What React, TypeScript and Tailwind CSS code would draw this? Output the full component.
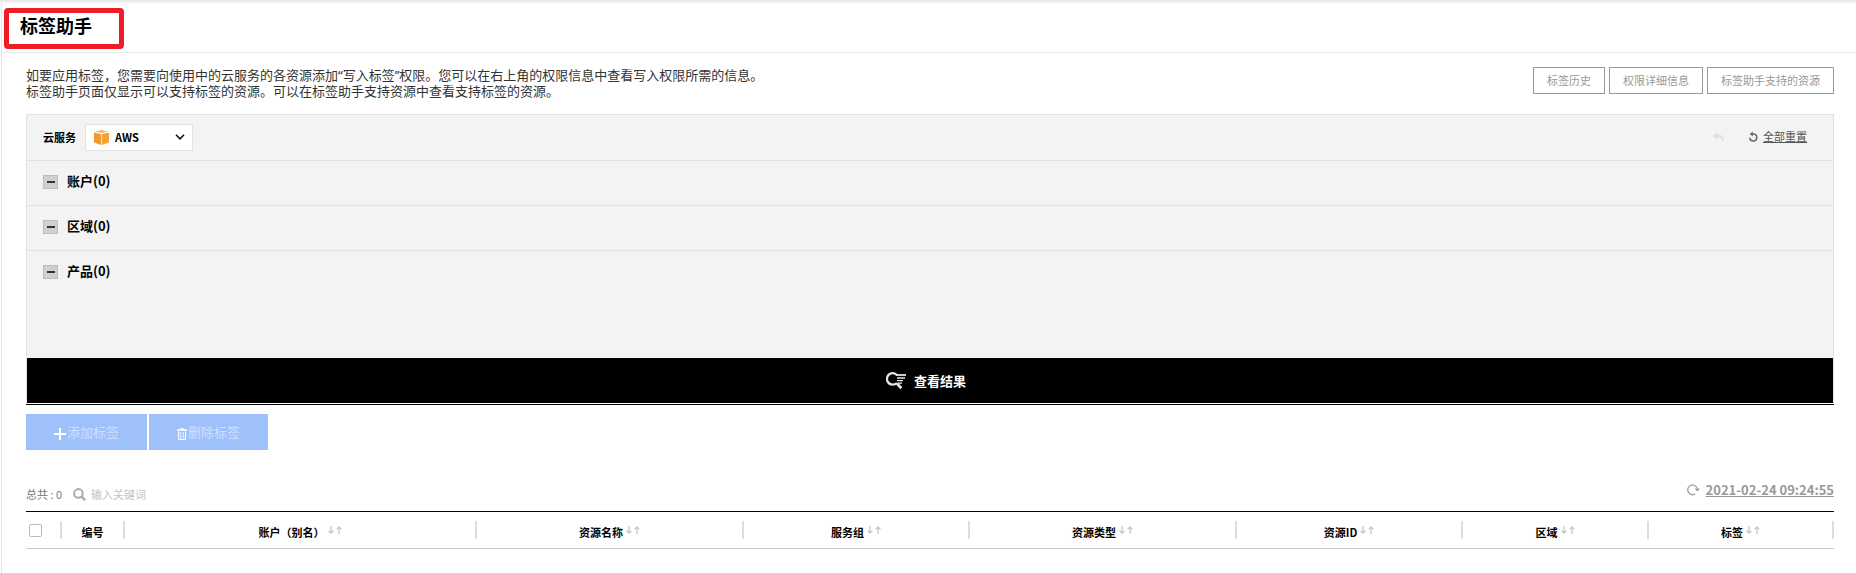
import { useState } from "react";

const COLUMNS = [
  { label: "账户（别名）", width: 352 },
  { label: "资源名称", width: 267 },
  { label: "服务组", width: 226 },
  { label: "资源类型", width: 267 },
  { label: "资源ID", width: 226 },
  { label: "区域", width: 186 },
  { label: "标签", width: 185 },
];

const CHECK_WIDTH = 36;
const NUMBER_WIDTH = 63;
const TOTAL_WIDTH =
  CHECK_WIDTH + NUMBER_WIDTH + COLUMNS.reduce((sum, c) => sum + c.width, 0);

const toPercent = (width: number) => `${(width / TOTAL_WIDTH) * 100}%`;

function AwsIcon() {
  return (
    <svg width="15" height="15" viewBox="0 0 15 15" aria-hidden="true">
      <path d="M0 2.4 7 4v11L0 12.6z" fill="#ef9a30" />
      <path d="M15 2.4 8 4v11l7-2.4z" fill="#f2a03a" />
      <path d="M1 1.6 7.5 0 14 1.6 7.5 3.1z" fill="#f5b467" />
      <path d="M7.5 4v11" stroke="#fbe0bd" />
    </svg>
  );
}

function ResultIcon() {
  return (
    <svg
      width="20"
      height="18"
      viewBox="0 0 20 18"
      fill="none"
      stroke="#e4e4e4"
      aria-hidden="true"
    >
      <path
        d="M11.2 3.4A5.7 5.7 0 1 0 6.6 12.6Q9.4 12.6 11 11"
        strokeWidth="2.3"
      />
      <path d="m11 11.5 4.3 4.8" strokeWidth="2.8" />
      <path d="M10 3h10" strokeWidth="1.8" />
      <path d="M11 6h8M11 8.7h6M12 11.2h4" strokeWidth="1.3" />
    </svg>
  );
}

function PlusIcon() {
  return (
    <svg width="12" height="12" viewBox="0 0 12 12" aria-hidden="true">
      <path d="M6 0v12M0 6h12" stroke="#fff" strokeWidth="2" />
    </svg>
  );
}

function TrashIcon() {
  return (
    <svg
      width="10"
      height="12"
      viewBox="0 0 10 12"
      fill="none"
      stroke="#fff"
      aria-hidden="true"
    >
      <path d="M0 2h10M3.2 1h3.6" strokeWidth="1.3" />
      <path d="M1.5 3.4v7q0 1 1 1h5q1 0 1-1v-7" strokeWidth="1.1" />
      <path d="M3.7 4v6M6.3 4v6" stroke="#e3edfe" strokeWidth="1.2" />
    </svg>
  );
}

function SearchIcon() {
  return (
    <svg
      width="13"
      height="13"
      viewBox="0 0 13 13"
      fill="none"
      stroke="#aaa"
      aria-hidden="true"
    >
      <circle cx="5.4" cy="5.4" r="4.3" strokeWidth="2" />
      <path d="m8.6 8.6 3.6 3.6" strokeWidth="2.4" />
    </svg>
  );
}

function UndoIcon() {
  return (
    <svg width="11" height="10" viewBox="0 0 11 10" aria-hidden="true">
      <path d="M0 4 4.4 0v8z" fill="#ddd" />
      <path
        d="M3.5 4h2.8q3.6 0 3.6 4.6"
        fill="none"
        stroke="#ddd"
        strokeWidth="2"
      />
    </svg>
  );
}

function ResetIcon() {
  return (
    <svg width="9" height="11" viewBox="0 0 9 11" aria-hidden="true">
      <path
        d="M2.5 3h2.2a3.5 3.5 0 1 1-3.9 3.6"
        fill="none"
        stroke="#666"
        strokeWidth="1.5"
      />
      <path d="M.6 3 3.8.4v5z" fill="#666" />
    </svg>
  );
}

function RefreshIcon() {
  return (
    <svg width="13" height="12" viewBox="0 0 13 12" aria-hidden="true">
      <path
        d="M8.3 9.8A4.8 4.8 0 1 1 10.2 4.6"
        fill="none"
        stroke="#aaa"
        strokeWidth="1.5"
      />
      <path d="M7.6 4.6H13l-2.7 3z" fill="#999" />
    </svg>
  );
}

function SortIcon() {
  return (
    <svg
      width="14"
      height="8"
      viewBox="0 0 14 8"
      fill="none"
      stroke="#c4c4c4"
      strokeWidth="1.2"
      aria-hidden="true"
    >
      <path d="M3 0v7M.6 4.6 3 7.2l2.4-2.6" />
      <path d="M11 8V1M8.6 3.4 11 .8l2.4 2.6" />
    </svg>
  );
}

function LinkButton({ label }: { label: string }) {
  return (
    <button
      type="button"
      className="h-[27px] px-[13px] text-[11px] text-[#999] bg-white border border-[#999]"
    >
      {label}
    </button>
  );
}

function FilterSection({
  label,
  className,
}: {
  label: string;
  className?: string;
}) {
  return (
    <section className={`px-4 border-t border-[#e2e2e2] ${className}`}>
      <button
        type="button"
        className="flex items-center h-[42px] gap-[9px] text-[13px] font-bold text-black"
      >
        <span className="flex items-center justify-center w-[15px] h-[14px] bg-[#d0d0d0] border border-[#bdbdbd]">
          <span className="w-2 h-[2px] bg-[#333]" />
        </span>
        <span className="pb-[2px]">{label}</span>
      </button>
    </section>
  );
}

function Separator() {
  return <span className="w-[2px] h-[18px] shrink-0 bg-[#ddd]" />;
}

export default function App() {
  const [keyword, setKeyword] = useState("");

  return (
    <div className="min-h-screen bg-white font-['Noto_Sans_CJK_SC','Noto_Sans',sans-serif]">
      <div className="h-1 bg-linear-to-b from-[#e4e4e4] to-white" />
      <div className="ml-px border-l border-[#e5e5e5] min-h-[calc(100vh-4px)]">
        <header className="flex px-[2px] pt-1 pb-[3px] border-b border-[#ebebeb]">
          <h1 className="h-[41px] pl-[11px] pr-[27px] text-lg leading-6 font-bold text-black border-[5px] border-[#ee1c25] rounded-sm">
            标签助手
          </h1>
        </header>

        <main className="pl-6 pr-[22px] pt-[14px]">
          <div className="flex items-start justify-between">
            <p className="font-['Noto_Sans','Noto_Sans_CJK_SC',sans-serif] text-[13px] leading-4 text-[#333]">
              如要应用标签，您需要向使用中的云服务的各资源添加“写入标签”权限。您可以在右上角的权限信息中查看写入权限所需的信息。
              <br />
              标签助手页面仅显示可以支持标签的资源。可以在标签助手支持资源中查看支持标签的资源。
            </p>
            <div className="flex gap-1 shrink-0">
              <LinkButton label="标签历史" />
              <LinkButton label="权限详细信息" />
              <LinkButton label="标签助手支持的资源" />
            </div>
          </div>

          <div className="mt-[15px] bg-[#f3f3f3] border border-b-0 border-[#e2e2e2]">
            <div className="flex items-center justify-between h-[45px] pl-4 pr-[26px]">
              <div className="flex items-center gap-[9px]">
                <label
                  htmlFor="cloud"
                  className="text-[11px] font-bold text-black"
                >
                  云服务
                </label>
                <div className="relative">
                  <select
                    id="cloud"
                    className="block w-[108px] h-[27px] pl-[29px] text-[11px] font-bold text-black bg-white border border-[#e2e2e2] appearance-none"
                  >
                    <option>AWS</option>
                  </select>
                  <span className="absolute inset-y-0 left-[9px] flex items-center pointer-events-none">
                    <AwsIcon />
                  </span>
                  <span className="absolute inset-y-0 flex items-center pb-[2px] pointer-events-none right-2">
                    <svg
                      width="10"
                      height="6"
                      viewBox="0 0 10 6"
                      fill="none"
                      aria-hidden="true"
                    >
                      <path
                        d="m1 .8 4 4 4-4"
                        stroke="#111"
                        strokeWidth="1.6"
                      />
                    </svg>
                  </span>
                </div>
              </div>
              <div className="flex items-center gap-[25px] pb-[2px]">
                <button type="button" aria-label="undo" disabled>
                  <UndoIcon />
                </button>
                <button
                  type="button"
                  className="flex items-center gap-[5px] text-[11px] text-[#555]"
                >
                  <ResetIcon />
                  <span className="underline">全部重置</span>
                </button>
              </div>
            </div>
            <FilterSection label="账户(0)" className="h-[45px]" />
            <FilterSection label="区域(0)" className="h-[45px]" />
            <FilterSection label="产品(0)" className="h-[108px]" />
            <button
              type="button"
              className="flex items-center justify-center w-full h-[45px] gap-2 pr-2 text-[13px] font-bold text-white bg-black"
            >
              <ResultIcon />
              查看结果
            </button>
          </div>

          <div className="flex gap-[2px] pt-[9px] mt-px border-t border-black">
            <button
              type="button"
              className="flex items-center h-9 gap-px px-7 text-[13px] text-[#cfe0fd] bg-[#9fc1fb]"
            >
              <span className="pt-1">
                <PlusIcon />
              </span>
              添加标签
            </button>
            <button
              type="button"
              className="flex items-center h-9 gap-px px-7 text-[13px] text-[#cfe0fd] bg-[#9fc1fb]"
            >
              <span className="pt-1">
                <TrashIcon />
              </span>
              删除标签
            </button>
          </div>

          <div className="flex items-center justify-between h-6 mt-7 mb-[9px]">
            <div className="flex items-center pt-2 text-[11px] text-[#777]">
              <span>总共 : 0</span>
              <label htmlFor="keyword" className="ml-[11px] mr-[5px]">
                <SearchIcon />
              </label>
              <input
                id="keyword"
                type="text"
                value={keyword}
                onChange={(e) => setKeyword(e.target.value)}
                placeholder="输入关键词"
                className="w-40 outline-none placeholder:text-[#c4c4c4]"
              />
            </div>
            <button
              type="button"
              className="flex items-center gap-[6px] text-[13px] font-bold text-[#999]"
            >
              <RefreshIcon />
              <span className="underline">2021-02-24 09:24:55</span>
            </button>
          </div>

          <table className="w-full border-t border-b table-fixed border-t-black border-b-[#ccc]">
            <colgroup>
              <col style={{ width: toPercent(CHECK_WIDTH) }} />
              <col style={{ width: toPercent(NUMBER_WIDTH) }} />
              {COLUMNS.map((c) => (
                <col key={c.label} style={{ width: toPercent(c.width) }} />
              ))}
            </colgroup>
            <thead>
              <tr className="text-[11px] text-black">
                <th className="p-0">
                  <div className="flex items-center justify-between h-9 pl-[3px]">
                    <input
                      type="checkbox"
                      aria-label="select all"
                      className="w-[13px] h-[13px] bg-white border border-[#bbb] rounded-xs appearance-none"
                    />
                    <Separator />
                  </div>
                </th>
                <th className="p-0">
                  <div className="flex items-center h-9">
                    <span className="flex-1 pt-1 font-bold">编号</span>
                    <Separator />
                  </div>
                </th>
                {COLUMNS.map((c) => (
                  <th key={c.label} className="p-0">
                    <div className="flex items-center h-9">
                      <button
                        type="button"
                        className="flex items-center justify-center flex-1 gap-[3px] font-bold"
                      >
                        <span className="pt-1">{c.label}</span>
                        <SortIcon />
                      </button>
                      <Separator />
                    </div>
                  </th>
                ))}
              </tr>
            </thead>
          </table>
        </main>
      </div>
    </div>
  );
}
